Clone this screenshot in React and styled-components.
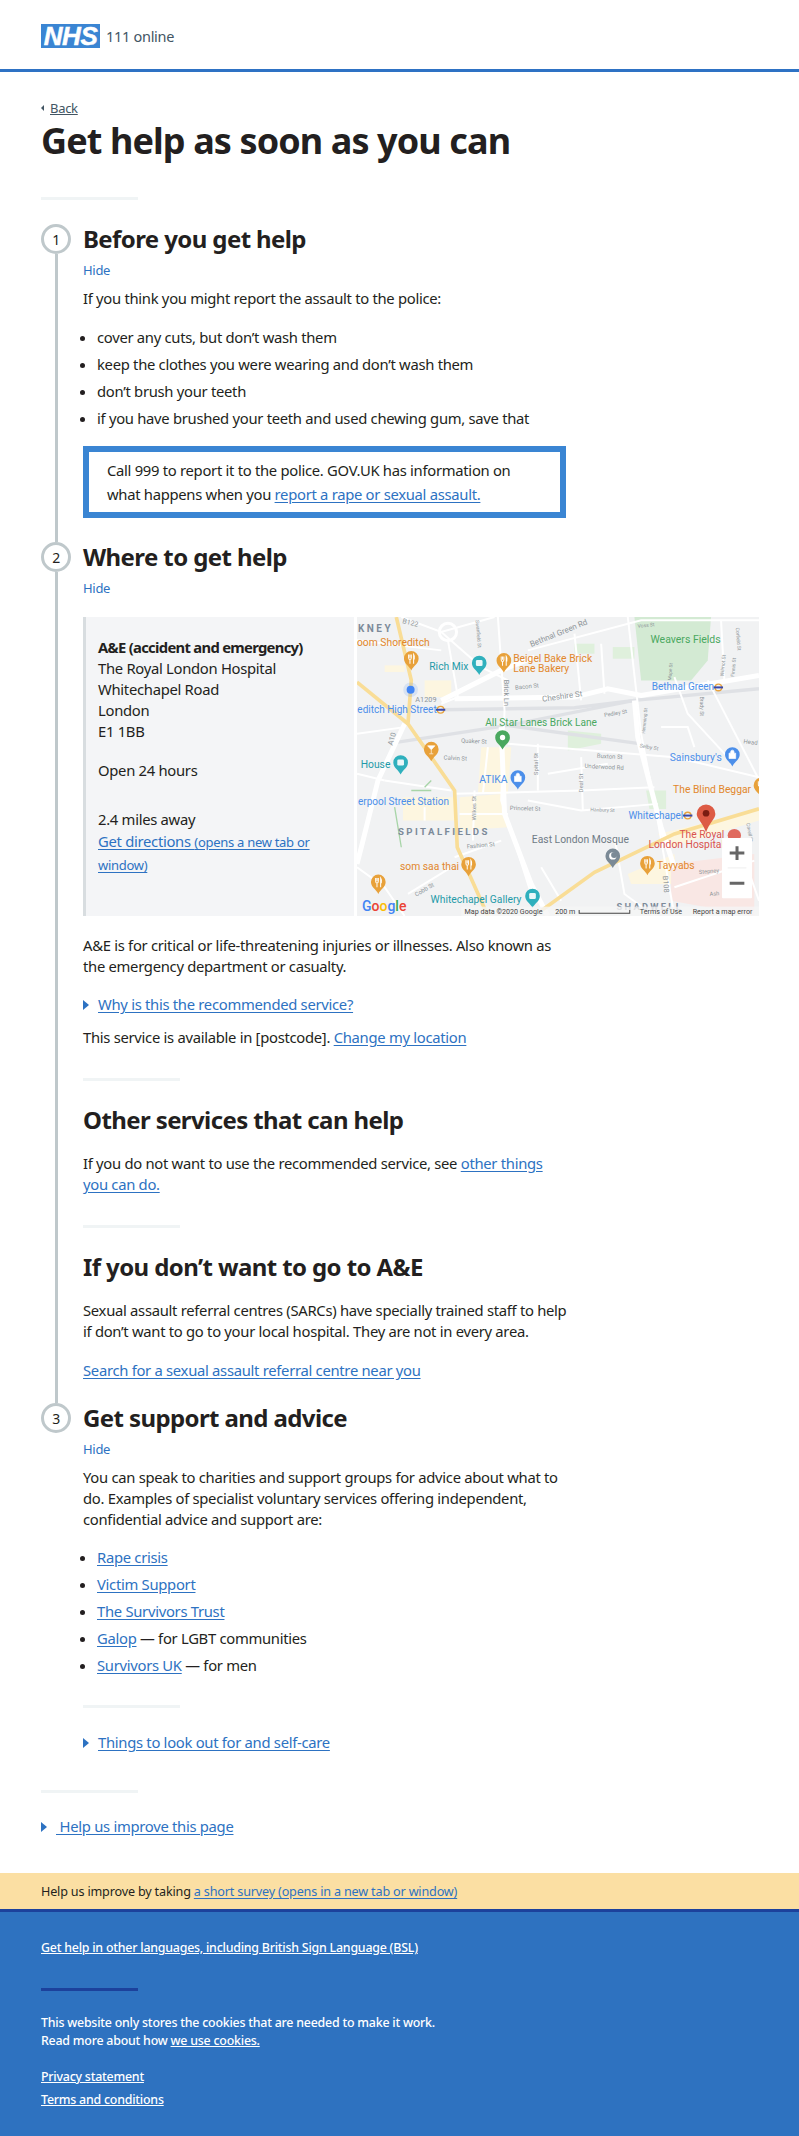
import React from "react";
import styled, { createGlobalStyle } from "styled-components";

const Global = createGlobalStyle`
  html, body {
    margin: 0;
    padding: 0;
    background: #fff;
  }
  body {
    font-family: "Noto Sans", "Open Sans", sans-serif;
    font-size: 14.8px;
    letter-spacing: -0.29px;
    line-height: 21px;
    color: #231f20;
  }
`;

const LINK = "#2d72c2";
const STEP_GREY = "#bfc8cb";

const Header = styled.header`
  height: 45px;
  border-bottom: 3px solid #2e72c4;
  padding: 24px 41px 0;
  display: flex;
  align-items: flex-start;
  gap: 6px;
`;

const Logo = styled.div`
  width: 59px;
  height: 24px;
  background: #3a85d3;
  color: #fff;
  font: italic 700 26px/24px "Liberation Sans", sans-serif;
  -webkit-text-stroke: 0.5px #fff;
  letter-spacing: -0.4px;
  text-align: center;
`;

const Service = styled.span`
  font-size: 14.5px;
  line-height: 24px;
  color: #425563;
`;

const Main = styled.main`
  padding: 0 41px;
`;

const A = styled.a`
  color: ${LINK};
  text-decoration: underline;
  text-underline-offset: 2px;
`;

const BackRow = styled.div`
  display: flex;
  align-items: center;
  gap: 6px;
  margin-top: 26px;
  height: 20px;
  font-size: 13px;
  color: #425563;
`;

const BackArrow = styled.span`
  width: 0;
  height: 0;
  border-style: solid;
  border-width: 3.5px 3.5px 3.5px 0;
  border-color: transparent #425563 transparent transparent;
`;

const BackLink = styled.a`
  color: #425563;
  text-decoration: underline;
`;

const Title = styled.h1`
  margin: 3px 0 0;
  font-size: 36px;
  letter-spacing: -0.9px;
  line-height: 40px;
  font-weight: 700;
  color: #231f20;
`;

const Rule = styled.div`
  width: ${(p) => p.$w || 97}px;
  height: 3px;
  background: ${(p) => p.$color || "#f0f4f5"};
`;

const PageRule = styled(Rule)`
  margin-top: 36px;
  margin-bottom: 24px;
`;

const Steps = styled.ol`
  list-style: none;
  margin: 0;
  padding: 0;
`;

const Step = styled.li`
  display: grid;
  grid-template-columns: 30px 1fr;
  column-gap: 12px;
`;

const Rail = styled.div`
  display: flex;
  flex-direction: column;
  align-items: center;
`;

const Circle = styled.div`
  width: 30px;
  height: 30px;
  box-sizing: border-box;
  flex: none;
  border: 3px solid ${STEP_GREY};
  border-radius: 50%;
  display: flex;
  align-items: center;
  justify-content: center;
  font-size: 14px;
  background: #fff;
`;

const RailLine = styled.div`
  width: 3px;
  flex: 1;
  background: ${STEP_GREY};
`;

const StepBody = styled.div`
  min-width: 0;
  padding-bottom: ${(p) => p.$pb || 0}px;
`;

const StepTitle = styled.h2`
  margin: 0;
  font-size: 24px;
  letter-spacing: -0.6px;
  line-height: 30px;
  font-weight: 700;
`;

const Hide = styled.a`
  display: block;
  margin-top: 8px;
  font-size: 13px;
  line-height: 17px;
  color: ${LINK};
`;

const Text = styled.p`
  margin: ${(p) => p.$mt || 0}px 0 0;
  max-width: 484px;
`;

const Bullets = styled.ul`
  margin: ${(p) => p.$mt || 0}px 0 0;
  padding: 0 0 0 14px;
  list-style: disc;
  display: flex;
  flex-direction: column;
  gap: 6px;
`;

const Callout = styled.div`
  margin-top: 17px;
  width: 483px;
  box-sizing: border-box;
  border: 6px solid #3a85d3;
  padding: 6px 18px;
  line-height: 24px;
  height: 72px;
`;

const ServicePanel = styled.section`
  margin-top: 20px;
  display: grid;
  grid-template-columns: 271px 402px;
  column-gap: 3px;
  height: 299px;
`;

const Address = styled.div`
  background: #f4f5f7;
  border-left: 3px solid #d8dde0;
  padding: 20px 12px 0;

  strong {
    letter-spacing: -0.7px;
  }
`;

const AddressSpacer = styled.div`
  height: ${(p) => p.$h}px;
`;

const Small = styled.span`
  font-size: 13px;
`;

const Directions = styled(A)`
  line-height: 22px;
`;

const Toggle = styled.div`
  margin-top: ${(p) => p.$mt || 0}px;
  display: flex;
  align-items: center;
  column-gap: ${(p) => p.$gap || 9}px;
`;

const Triangle = styled.span`
  width: 0;
  height: 0;
  flex: none;
  border-style: solid;
  border-width: 5px 0 5px 6px;
  border-color: transparent transparent transparent ${LINK};
`;

const SectionRule = styled(Rule)`
  margin-top: ${(p) => p.$mt || 30}px;
`;

const Heading = styled.h3`
  margin: 24px 0 0;
  font-size: 24px;
  letter-spacing: -0.6px;
  line-height: 30px;
  font-weight: 700;
`;

const Banner = styled.div`
  margin-top: 36px;
  height: 36px;
  box-sizing: border-box;
  background: #fbdfa3;
  padding: 0 41px;
  display: flex;
  align-items: center;
  font-size: 12.6px;
  letter-spacing: -0.17px;
  white-space: pre;
`;

const Footer = styled.footer`
  background: #2e72c0;
  border-top: 3px solid #1c419c;
  color: #fff;
  padding: 27px 41px 0;
  height: 227px;
  box-sizing: border-box;
  font-size: 12.4px;
  letter-spacing: -0.22px;
  line-height: 18px;
`;

const FooterLink = styled.a`
  color: #fff;
  text-decoration: underline;
  font-weight: 500;
`;

const FooterRule = styled(Rule)`
  margin: 31px 0 23px;
`;

const FooterText = styled.p`
  margin: 0;
  font-weight: 500;
`;

const FooterLinks = styled.div`
  margin-top: 18px;
  display: flex;
  flex-direction: column;
  align-items: flex-start;
  gap: 5px;
`;

const MapFrame = styled.div`
  width: 402px;
  height: 299px;
  overflow: hidden;
`;

const MapSvg = styled.svg`
  display: block;
  width: 100%;
  height: 100%;
  font-family: Roboto, "Liberation Sans", sans-serif;
  letter-spacing: normal;
`;

const ORANGE = "#e8a13a";
const TEXT_ORANGE = "#e2872b";
const TEAL = "#2fb0bd";
const TEXT_TEAL = "#1f9aa8";
const BLUE = "#4c8fea";
const GREEN = "#4aa85f";
const GREY = "#7b8a96";
const PLACE = "#7c8a99";

const minor = [
  "M47 120 L300 150",
  "M300 95 L420 200 L500 240",
  "M180 50 L300 95 L460 50",
  "M320 120 L350 290 L300 310",
  "M470 50 L490 330 L480 600 L570 880",
  "M560 150 L900 60 L1254 60",
  "M700 100 L720 300",
  "M780 130 L790 280",
  "M860 50 L900 400 L950 660 L1000 946",
  "M500 430 L1000 470 L1254 530",
  "M340 580 L720 570 L940 560",
  "M590 430 L590 570",
  "M720 470 L725 630",
  "M620 520 L800 490",
  "M560 600 L720 630 L950 610",
  "M400 570 L395 720",
  "M47 400 L190 380",
  "M47 520 L130 540",
  "M130 540 L330 570",
  "M1000 230 L1040 340 L1160 470",
  "M1100 240 L1250 530",
  "M1140 60 L1150 240",
  "M960 380 L1040 380 L1060 440",
  "M340 770 L480 720",
  "M200 880 L330 800",
  "M47 800 L130 860 L190 946",
  "M600 800 L660 900",
  "M820 710 L850 880 L940 946",
  "M1180 690 L1254 900",
  "M1000 860 L1240 780",
  "M355 640 L500 640",
  "M440 440 L425 580",
  "M250 620 L250 660",
];

const yellow = [
  "M165 50 L210 240 L200 370 L340 570 L348 740 L440 946",
  "M47 245 L200 370",
  "M600 930 L760 815 L1000 700 L1254 625",
];

const rail = [
  "M170 425 L500 375 L880 300 L1254 265",
  "M300 328 L700 322 L880 300",
  "M500 375 L900 430",
];

const blocks = [
  ["#fdf6e0", "M355 590 L490 580 L500 680 L355 690 Z"],
  ["#fdf6e0", "M420 440 L510 440 L500 580 L410 580 Z"],
  ["#fdf6e0", "M185 590 L345 590 L345 660 L185 660 Z"],
  ["#fdf6e0", "M130 195 L190 195 L190 215 L130 215 Z"],
  ["#fdf6e0", "M250 240 L330 240 L330 290 L250 290 Z"],
  ["#fdf6e0", "M860 820 L1000 760 L1010 850 L870 850 Z"],
  ["#fdf6e0", "M950 700 L1254 630 L1254 660 L990 740 Z"],
  ["#f9e7e4", "M990 790 L1240 760 L1240 946 L990 900 Z"],
  ["#d3ead3", "M880 50 L1110 50 L1100 180 L1050 240 L900 240 Z"],
  ["#dff0dc", "M700 130 L760 130 L760 160 L700 160 Z"],
  ["#dff0dc", "M815 140 L880 140 L880 175 L815 175 Z"],
  ["#dff0dc", "M915 570 L975 570 L975 625 L925 625 Z"],
  ["#dff0dc", "M680 390 L780 400 L780 430 L680 450 Z"],
];

const labels = [
  { x: 50, y: 96, t: "K N E Y", c: PLACE, s: 30, w: 700 },
  { x: 47, y: 138, t: "oom Shoreditch", c: TEXT_ORANGE, s: 31 },
  { x: 264, y: 208, t: "Rich Mix", c: TEXT_TEAL, s: 31 },
  { x: 516, y: 184, t: "Beigel Bake Brick", c: TEXT_ORANGE, s: 31 },
  { x: 516, y: 215, t: "Lane Bakery", c: TEXT_ORANGE, s: 31 },
  { x: 928, y: 128, t: "Weavers Fields", c: GREEN, s: 31.5 },
  { x: 932, y: 270, t: "Bethnal Green", c: BLUE, s: 30 },
  { x: 48, y: 338, t: "editch High Street", c: BLUE, s: 30 },
  { x: 432, y: 376, t: "All Star Lanes Brick Lane", c: GREEN, s: 30.5 },
  { x: 58, y: 503, t: "House", c: TEXT_TEAL, s: 31 },
  { x: 986, y: 481, t: "Sainsbury's", c: BLUE, s: 31 },
  { x: 414, y: 548, t: "ATIKA", c: BLUE, s: 31 },
  { x: 996, y: 578, t: "The Blind Beggar", c: TEXT_ORANGE, s: 31 },
  { x: 50, y: 614, t: "erpool Street Station", c: BLUE, s: 30 },
  { x: 862, y: 656, t: "Whitechapel", c: BLUE, s: 30 },
  { x: 1015, y: 711, t: "The Royal", c: "#d9534f", s: 31 },
  { x: 922, y: 743, t: "London Hospital", c: "#d9534f", s: 31 },
  { x: 170, y: 703, t: "S P I T A L F I E L D S", c: PLACE, s: 29, w: 700 },
  { x: 572, y: 728, t: "East London Mosque", c: "#6f7b85", s: 31 },
  { x: 176, y: 809, t: "som saa thai", c: TEXT_ORANGE, s: 31 },
  { x: 948, y: 806, t: "Tayyabs", c: TEXT_ORANGE, s: 31 },
  { x: 268, y: 906, t: "Whitechapel Gallery", c: TEXT_TEAL, s: 31 },
  { x: 826, y: 928, t: "S H A D W E L L", c: PLACE, s: 28, w: 700 },
];

const streets = [
  { x: 182, y: 68, t: "B122", r: 14, s: 21 },
  { x: 570, y: 140, t: "Bethnal Green Rd", r: -22, s: 24 },
  { x: 522, y: 268, t: "Bacon St", r: -6, s: 18 },
  { x: 604, y: 304, t: "Cheshire St", r: -8, s: 24 },
  { x: 222, y: 304, t: "A1209", s: 22 },
  { x: 488, y: 238, t: "Brick Ln", r: 90, s: 22 },
  { x: 790, y: 350, t: "Pedley St", r: -10, s: 17 },
  { x: 359, y: 426, t: "Quaker St", r: 3, s: 18 },
  { x: 307, y: 477, t: "Calvin St", r: 3, s: 18 },
  { x: 767, y: 472, t: "Buxton St", r: 3, s: 18 },
  { x: 730, y: 502, t: "Underwood Rd", r: 3, s: 18 },
  { x: 895, y: 440, t: "Selby St", r: 10, s: 16 },
  { x: 1207, y: 428, t: "Head", r: 8, s: 18 },
  { x: 506, y: 628, t: "Princelet St", r: 2, s: 18 },
  { x: 747, y: 632, t: "Hanbury St", r: 2, s: 15 },
  { x: 377, y: 744, t: "Fashion St", r: -5, s: 18 },
  { x: 225, y: 888, t: "Cobb St", r: -30, s: 18 },
  { x: 1074, y: 820, t: "Stepney", r: -5, s: 17 },
  { x: 1106, y: 886, t: "Ash", r: -5, s: 17 },
  { x: 154, y: 436, t: "A10", r: -75, s: 22 },
  { x: 590, y: 524, t: "Spital St", r: -90, s: 18 },
  { x: 726, y: 576, t: "Deal St", r: -90, s: 18 },
  { x: 404, y: 660, t: "Wilkes St", r: -90, s: 18 },
  { x: 965, y: 826, t: "B108", r: 85, s: 22 },
  { x: 1078, y: 288, t: "Brady St", r: 90, s: 16 },
  { x: 912, y: 400, t: "Hemming St", r: -85, s: 14 },
  { x: 990, y: 240, t: "Mape St", r: -85, s: 14 },
  { x: 1148, y: 228, t: "Wilmot St", r: -85, s: 15 },
  { x: 1180, y: 230, t: "Finnis St", r: -85, s: 15 },
  { x: 1184, y: 82, t: "Corfield St", r: 85, s: 15 },
  { x: 890, y: 82, t: "Voss St", r: -5, s: 15 },
  { x: 403, y: 60, t: "Swanfield St", r: 85, s: 15 },
  { x: 1216, y: 668, t: "Cavell St", r: 80, s: 15 },
];

const pins = [
  { x: 210, y: 178, c: ORANGE, kind: "food" },
  { x: 488, y: 184, c: ORANGE, kind: "food" },
  { x: 414, y: 192, c: TEAL, kind: "art" },
  { x: 270, y: 450, c: ORANGE, kind: "bar" },
  { x: 178, y: 490, c: TEAL, kind: "art" },
  { x: 484, y: 415, c: GREEN, kind: "dot" },
  { x: 530, y: 535, c: BLUE, kind: "bag" },
  { x: 1174, y: 466, c: BLUE, kind: "bag" },
  { x: 1260, y: 558, c: ORANGE, kind: "food" },
  { x: 382, y: 795, c: ORANGE, kind: "food" },
  { x: 919, y: 792, c: ORANGE, kind: "food" },
  { x: 111, y: 848, c: ORANGE, kind: "food" },
  { x: 574, y: 890, c: TEAL, kind: "art" },
  { x: 815, y: 770, c: GREY, kind: "moon" },
];

const PinGlyph = ({ kind, c }) => {
  if (kind === "food")
    return <path d="M-8 -16 V-6 Q-8 -1 -4 -1 V12 M-4 -16 V-6 M0 -16 V-6 Q0 -1 -4 -1 M7 12 V-16 Q11 -10 9 -2 H7" stroke="#fff" strokeWidth="3" fill="none" />;
  if (kind === "bar")
    return <path d="M-11 -14 H11 L0 -2 Z M0 -2 V9 M-6 10 H6" fill="#fff" stroke="#fff" strokeWidth="2" />;
  if (kind === "bag")
    return <path d="M-10 -8 H10 V8 H-10 Z M-5 -8 V-12 A5 5 0 0 1 5 -12 V-8" fill="#fff" stroke="#fff" strokeWidth="2" />;
  if (kind === "moon")
    return (
      <>
        <circle cx="0" cy="-4" r="11" fill="#fff" />
        <circle cx="4" cy="-7" r="9" fill={c} />
      </>
    );
  if (kind === "art")
    return <rect x="-10" y="-13" width="20" height="18" rx="4" fill="#fff" opacity="0.9" />;
  return <circle cx="0" cy="-4" r="8" fill="#fff" />;
};

const Pin = ({ x, y, c, kind }) => (
  <g transform={`translate(${x} ${y})`}>
    <path d="M0 32 C-6 18 -22 12 -22 -4 A22 22 0 1 1 22 -4 C22 12 6 18 0 32 Z" fill={c} />
    <PinGlyph kind={kind} c={c} />
  </g>
);

const Tube = ({ x, y }) => (
  <g transform={`translate(${x} ${y})`}>
    <circle r="10" fill="none" stroke="#e8a33d" strokeWidth="4" />
    <rect x="-14" y="-3" width="28" height="6" fill="#3949ab" />
  </g>
);

const LondonMap = () => (
  <MapSvg viewBox="47 50 1207 896" preserveAspectRatio="none" aria-label="Map">
    <rect x="47" y="50" width="1207" height="896" fill="#f1f2f3" />
    {blocks.map(([fill, d]) => (
      <path key={d} d={d} fill={fill} />
    ))}
    <g fill="none" stroke="#dfe1e5" strokeWidth="10">
      {rail.map((d) => (
        <path key={d} d={d} />
      ))}
    </g>
    <g fill="none" stroke="#fff" strokeWidth="6">
      {minor.map((d) => (
        <path key={d} d={d} />
      ))}
    </g>
    <g fill="none" stroke="#fff" strokeWidth="15">
      <path d="M190 370 L110 540 L60 740 L47 790" />
      <path d="M300 300 L480 210 L580 170" />
      <path d="M340 295 L700 290 L800 265 L900 285 L1254 225" />
      <path d="M480 380 L490 640 L570 850 L620 946" />
      <path d="M880 300 L890 410 L960 680 L1000 800" />
    </g>
    <circle cx="320" cy="95" r="26" fill="none" stroke="#fff" strokeWidth="9" />
    <g fill="none" stroke="#f9dd96" strokeWidth="11">
      {yellow.map((d) => (
        <path key={d} d={d} />
      ))}
    </g>
    <path d="M250 560 L270 540 M210 570 L270 570 M160 620 L180 740" stroke="#a8d5a8" strokeWidth="4" fill="none" />
    {streets.map((s) => (
      <text
        key={s.t}
        x={s.x}
        y={s.y}
        fontSize={s.s}
        fill="#8e9599"
        transform={s.r ? `rotate(${s.r} ${s.x} ${s.y})` : undefined}
      >
        {s.t}
      </text>
    ))}
    {labels.map((l) => (
      <text key={l.t} x={l.x} y={l.y} fontSize={l.s} fontWeight={l.w || 400} fill={l.c}>
        {l.t}
      </text>
    ))}
    {pins.map((p) => (
      <Pin key={`${p.x}-${p.y}`} {...p} />
    ))}
    <Tube x={298} y={328} />
    <Tube x={1132} y={261} />
    <Tube x={1040} y={645} />
    <circle cx="208" cy="268" r="22" fill="#4285f4" opacity="0.15" />
    <circle cx="208" cy="268" r="12" fill="#4285f4" />
    <path d="M1095 695 C1085 665 1067 655 1067 640 A28 28 0 1 1 1123 640 C1123 655 1105 665 1095 695 Z" fill="#dd5b45" />
    <circle cx="1095" cy="638" r="10" fill="#7b1d12" />
    <circle cx="1180" cy="705" r="20" fill="#e06a5e" />
    <rect x="1143" y="712" width="90" height="181" rx="3" fill="#fff" />
    <path d="M1166 757 H1210 M1188 737 V778 M1166 848 H1210" stroke="#666" strokeWidth="9" fill="none" />
    <path d="M1160 802 H1216" stroke="#e6e6e6" strokeWidth="2" />
    <rect x="360" y="918" width="894" height="28" fill="#f5f5f5" opacity="0.8" />
    <g fontSize="21.5" fill="#444">
      <text x="370" y="940">Map data ©2020 Google</text>
      <text x="642" y="940">200 m</text>
      <text x="896" y="940">Terms of Use</text>
      <text x="1055" y="940">Report a map error</text>
    </g>
    <path d="M714 928 V938 H866 V928" stroke="#444" strokeWidth="3" fill="none" />
    <text x="62" y="930" fontSize="42" fontWeight="500">
      <tspan fill="#4285f4">G</tspan>
      <tspan fill="#ea4335">o</tspan>
      <tspan fill="#fbbc05">o</tspan>
      <tspan fill="#4285f4">g</tspan>
      <tspan fill="#34a853">l</tspan>
      <tspan fill="#ea4335">e</tspan>
    </text>
  </MapSvg>
);

const App = () => (
  <>
    <Global />
    <Header>
      <Logo>NHS</Logo>
      <Service>111 online</Service>
    </Header>
    <Main>
      <BackRow>
        <BackArrow />
        <BackLink href="#">Back</BackLink>
      </BackRow>
      <Title>Get help as soon as you can</Title>
      <PageRule />
      <Steps>
        <Step>
          <Rail>
            <Circle>1</Circle>
            <RailLine />
          </Rail>
          <StepBody $pb={24}>
            <StepTitle>Before you get help</StepTitle>
            <Hide>Hide</Hide>
            <Text $mt={9}>If you think you might report the assault to the police:</Text>
            <Bullets $mt={18}>
              <li>cover any cuts, but don’t wash them</li>
              <li>keep the clothes you were wearing and don’t wash them</li>
              <li>don’t brush your teeth</li>
              <li>if you have brushed your teeth and used chewing gum, save that</li>
            </Bullets>
            <Callout>
              Call 999 to report it to the police. GOV.UK has information on what happens when you{" "}
              <A href="#">report a rape or sexual assault.</A>
            </Callout>
          </StepBody>
        </Step>
        <Step>
          <Rail>
            <Circle>2</Circle>
            <RailLine />
          </Rail>
          <StepBody $pb={22}>
            <StepTitle>Where to get help</StepTitle>
            <Hide>Hide</Hide>
            <ServicePanel>
              <Address>
                <strong>A&amp;E (accident and emergency)</strong>
                <br />
                The Royal London Hospital
                <br />
                Whitechapel Road
                <br />
                London
                <br />
                E1 1BB
                <AddressSpacer $h={18} />
                Open 24 hours
                <AddressSpacer $h={28} />
                2.4 miles away
                <br />
                <Directions href="#">
                  Get directions <Small>(opens a new tab or window)</Small>
                </Directions>
              </Address>
              <MapFrame>
                <LondonMap />
              </MapFrame>
            </ServicePanel>
            <Text $mt={19}>
              A&amp;E is for critical or life-threatening injuries or illnesses. Also known as the
              emergency department or casualty.
            </Text>
            <Toggle $mt={17}>
              <Triangle />
              <A href="#">Why is this the recommended service?</A>
            </Toggle>
            <Text $mt={12}>
              This service is available in [postcode]. <A href="#">Change my location</A>
            </Text>
            <SectionRule $mt={30} />
            <Heading>Other services that can help</Heading>
            <Text $mt={18}>
              If you do not want to use the recommended service, see{" "}
              <A href="#">other things you can do.</A>
            </Text>
            <SectionRule $mt={30} />
            <Heading>If you don’t want to go to A&amp;E</Heading>
            <Text $mt={18}>
              Sexual assault referral centres (SARCs) have specially trained staff to help if don’t
              want to go to your local hospital. They are not in every area.
            </Text>
            <Text $mt={18}>
              <A href="#">Search for a sexual assault referral centre near you</A>
            </Text>
          </StepBody>
        </Step>
        <Step>
          <Rail>
            <Circle>3</Circle>
          </Rail>
          <StepBody>
            <StepTitle>Get support and advice</StepTitle>
            <Hide>Hide</Hide>
            <Text $mt={9}>
              You can speak to charities and support groups for advice about what to do. Examples of
              specialist voluntary services offering independent, confidential advice and support
              are:
            </Text>
            <Bullets $mt={17}>
              <li>
                <A href="#">Rape crisis</A>
              </li>
              <li>
                <A href="#">Victim Support</A>
              </li>
              <li>
                <A href="#">The Survivors Trust</A>
              </li>
              <li>
                <A href="#">Galop</A> — for LGBT communities
              </li>
              <li>
                <A href="#">Survivors UK</A> — for men
              </li>
            </Bullets>
            <SectionRule $mt={29} />
            <Toggle $mt={24}>
              <Triangle />
              <A href="#">Things to look out for and self-care</A>
            </Toggle>
          </StepBody>
        </Step>
      </Steps>
      <SectionRule $mt={37} />
      <Toggle $mt={23} $gap={9}>
        <Triangle />
        <A href="#">&nbsp;Help us improve this page</A>
      </Toggle>
    </Main>
    <Banner>
      Help us improve by taking <A href="#">a short survey (opens in a new tab or window)</A>
    </Banner>
    <Footer>
      <FooterLink href="#">Get help in other languages, including British Sign Language (BSL)</FooterLink>
      <FooterRule $color="#1c419c" />
      <FooterText>
        This website only stores the cookies that are needed to make it work.
        <br />
        Read more about how <FooterLink href="#">we use cookies.</FooterLink>
      </FooterText>
      <FooterLinks>
        <FooterLink href="#">Privacy statement</FooterLink>
        <FooterLink href="#">Terms and conditions</FooterLink>
      </FooterLinks>
    </Footer>
  </>
);

export default App;
